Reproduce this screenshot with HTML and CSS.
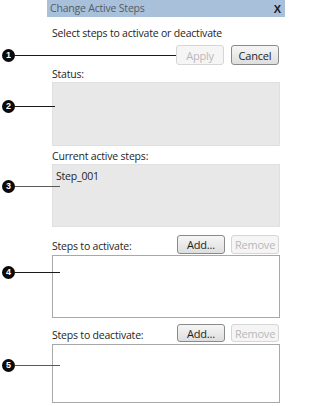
FILE: index.html
```html
<!DOCTYPE html>
<html>
<head>
<meta charset="utf-8">
<link rel="stylesheet" href="styles.css">
</head>
<body>
<div class="dialog">
  <div class="titlebar"><span class="title">Change Active Steps</span><span class="close">X</span></div>
  <div class="content">
    <div class="intro">Select steps to activate or deactivate</div>
    <div class="btnrow">
      <button class="btn" disabled>Apply</button>
      <button class="btn">Cancel</button>
    </div>
    <div class="label status-label">Status:</div>
    <div class="box gray status-box"></div>
    <div class="label current-label">Current active steps:</div>
    <div class="box gray current-box"><div class="item">Step_001</div></div>
    <div class="row activate-row">
      <span class="row-label">Steps to activate:</span>
      <button class="btn small">Add...</button>
      <button class="btn small" disabled>Remove</button>
    </div>
    <div class="box white activate-box"></div>
    <div class="row deactivate-row">
      <span class="row-label">Steps to deactivate:</span>
      <button class="btn small">Add...</button>
      <button class="btn small" disabled>Remove</button>
    </div>
    <div class="box white deactivate-box"></div>
  </div>
</div>

<div class="callout c1"><span class="num">1</span><span class="line dark"></span></div>
<div class="callout c2"><span class="num">2</span><span class="line dark"></span></div>
<div class="callout c3"><span class="num">3</span><span class="line mid"></span></div>
<div class="callout c4"><span class="num">4</span><span class="line dark"></span></div>
<div class="callout c5"><span class="num">5</span><span class="line mid"></span></div>
</body>
</html>
```

FILE: styles.css
```css
html {
  margin: 0;
  padding: 0;
  background: #ffffff;
}
body {
  margin: 0;
  padding: 0;
  background: #ffffff;
  width: 285px;
  height: 406px;
  position: relative;
  overflow: hidden;
  font-family: "Open Sans", "Noto Sans", "Liberation Sans", sans-serif;
  font-size: 10.5px;
  letter-spacing: -0.2px;
  color: #1e1e1e;
}
.dialog {
  margin-left: 47px;
  width: 238px;
  display: flex;
  flex-direction: column;
}
.titlebar {
  height: 17px;
  background: #a9c0db;
  display: flex;
  align-items: center;
  justify-content: space-between;
  padding: 0 4px 0 3px;
}
.title {
  color: #525c68;
  font-size: 10.5px;
  line-height: 17px;
}
.close {
  font-family: "Liberation Sans", sans-serif;
  font-weight: bold;
  font-size: 11px;
  letter-spacing: 0;
  color: #1a1a1a;
}
.content {
  display: flex;
  flex-direction: column;
  padding: 0 5px 0 5px;
}
.intro {
  margin-top: 8px;
  line-height: 16px;
}
.btnrow {
  margin-top: 4px;
  display: flex;
  justify-content: flex-end;
  gap: 7px;
  padding-right: 1px;
}
.btn {
  width: 48px;
  height: 20px;
  padding: 0;
  margin: 0;
  font-family: "Open Sans", "Noto Sans", "Liberation Sans", sans-serif;
  font-size: 11px;
  letter-spacing: -0.2px;
  color: #1e1e1e;
  border: 1px solid #8a8a8a;
  border-radius: 3px;
  background: linear-gradient(#f6f6f6, #dedede);
}
.btn:disabled {
  color: #b8b8b8;
  border-color: #d6d6d6;
  background: #f5f5f5;
}
.btn.small {
  height: 19px;
}
.deactivate-row .btn.small {
  height: 18px;
}
.label {
  line-height: 15px;
}
.status-label {
  margin-top: 2px;
}
.box {
  box-sizing: border-box;
  border: 1px solid #a8a8a8;
}
.box.gray {
  background: #e8e8e8;
  border-color: #e0e0e0;
}
.box.white {
  background: #ffffff;
}
.status-box {
  height: 64px;
}
.current-label {
  margin-top: 3px;
}
.current-box {
  height: 63px;
  padding: 4px 3px;
}
.item {
  line-height: 14px;
}
.row {
  display: flex;
  align-items: center;
  gap: 6px;
  padding-right: 1px;
}
.row-label {
  flex: 1;
  padding-top: 3px;
}
.activate-row {
  margin-top: 8px;
  margin-bottom: 1px;
}
.activate-box {
  height: 63px;
}
.deactivate-row {
  margin-top: 6px;
  margin-bottom: 2px;
}
.deactivate-box {
  height: 59px;
}
.callout {
  position: absolute;
  left: 2px;
  display: flex;
  align-items: center;
}
.num {
  width: 13px;
  height: 13px;
  border-radius: 50%;
  background: #0a0a0a;
  color: #ffffff;
  font-family: "Liberation Sans", sans-serif;
  font-weight: bold;
  font-size: 9px;
  letter-spacing: 0;
  line-height: 13px;
  text-align: center;
  flex: none;
}
.line {
  height: 1px;
  flex: none;
}
.line.dark {
  background: #1a1a1a;
}
.line.mid {
  background: #5a5a5a;
}
.c1 { top: 49px; }
.c1 .line { width: 161px; }
.c2 { top: 100px; }
.c2 .line { width: 40px; }
.c3 { top: 180px; }
.c3 .line { width: 45px; }
.c4 { top: 266px; }
.c4 .line { width: 45px; }
.c5 { top: 359px; }
.c5 .line { width: 45px; }
```
